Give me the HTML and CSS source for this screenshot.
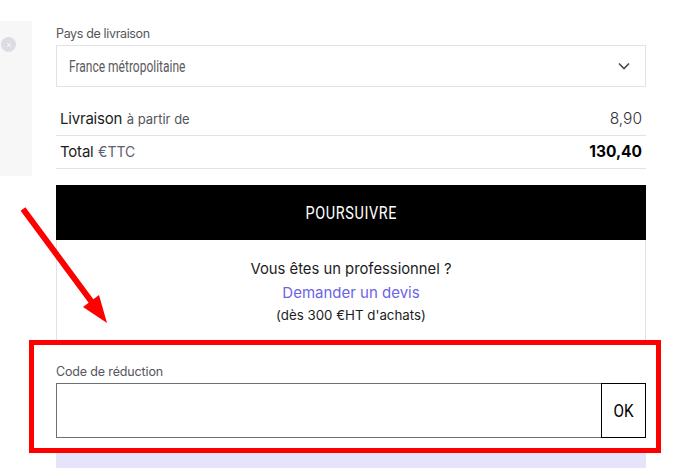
FILE: index.html
```html
<!DOCTYPE html>
<html lang="fr">
<head>
<meta charset="UTF-8">
<meta name="viewport" content="width=device-width, initial-scale=1.0">
<title>Panier</title>
<link rel="stylesheet" href="styles.css">
</head>
<body>
<div class="page">
    <aside class="side">
        <span class="remove">
            <svg width="6" height="6" viewBox="0 0 6 6"><path d="M1 1l4 4M5 1L1 5" stroke="#f4f4f6" stroke-width="1" fill="none"/></svg>
        </span>
    </aside>

    <main class="cart">
        <label class="field-label label-country">Pays de livraison</label>
        <div class="select">
            <span class="narrow narrow-left">France métropolitaine</span>
            <svg width="12" height="8" viewBox="0 0 12 8"><path d="M1 1.5l5 5 5-5" stroke="#4a4a50" stroke-width="1.6" fill="none"/></svg>
        </div>

        <div class="row row-shipping">
            <span><span class="row-title">Livraison</span> <small>à partir de</small></span>
            <span class="price">8,90</span>
        </div>
        <div class="row row-total">
            <span><span class="row-title">Total</span> <small class="ttc">€TTC</small></span>
            <strong>130,40</strong>
        </div>

        <button class="next" type="button"><span class="narrow">POURSUIVRE</span></button>

        <div class="pro">
            <p class="pro-title">Vous êtes un professionnel ?</p>
            <a class="pro-link" href="#">Demander un devis</a>
            <p class="pro-note">(dès 300 €HT d'achats)</p>
        </div>

        <div class="promo">
            <label class="field-label" for="code">Code de réduction</label>
            <div class="promo-line">
                <input type="text" id="code">
                <button type="button"><span class="narrow">OK</span></button>
            </div>
        </div>

        <div class="banner"></div>
    </main>
</div>

<!-- annotation drawn over the screenshot -->
<svg class="marks" width="680" height="468" viewBox="0 0 680 468">
    <rect x="31.5" y="342.5" width="627" height="108" fill="none" stroke="#f00" stroke-width="5"/>
    <path d="M20.6 210.8L25.4 207.2L93.4 299.2L99 295L107 323L83 307L88.6 302.8Z" fill="#f00"/>
</svg>
</body>
</html>
```
FILE: styles.css
```css
html, body {
    height: 100%;
}

body {
    margin: 0;
    overflow: hidden;
    background: #fff;
    font-family: "Inter", "Open Sans", sans-serif;
    color: #1c1c22;
}

.page {
    display: flex;
    align-items: flex-start;
    height: 468px;
    overflow: hidden;
}

.side {
    width: 32px;
    height: 155px;
    margin-top: 21px;
    padding-top: 16px;
    box-sizing: border-box;
    background: #f7f7f8;
}

.remove {
    display: flex;
    align-items: center;
    justify-content: center;
    width: 15px;
    height: 15px;
    margin-left: 1px;
    border-radius: 50%;
    background: #dcdce2;
}

.cart {
    width: 590px;
    margin-left: 24px;
    padding-top: 26px;
}

/* no condensed family available, so Roboto is squeezed */
.narrow {
    display: inline-block;
    font-family: "Roboto", sans-serif;
    transform: scaleX(0.8);
}

.narrow-left {
    transform: scaleX(0.75);
    transform-origin: left center;
}

.field-label {
    display: block;
    font-size: 12.5px;
    line-height: 15px;
    letter-spacing: -0.15px;
    color: #55555c;
}

.label-country {
    letter-spacing: -0.35px;
}

.select {
    display: flex;
    align-items: center;
    justify-content: space-between;
    height: 42px;
    margin-top: 4px;
    padding: 0 15px 0 12px;
    box-sizing: border-box;
    border: 1px solid #e2e2e6;
    font-size: 16px;
    color: #5a5a60;
}

.row {
    display: flex;
    align-items: center;
    justify-content: space-between;
    padding: 0 4px;
    border-bottom: 1px solid #e2e2e6;
}

.row-shipping {
    height: 49px;
    padding-top: 14px;
    box-sizing: border-box;
}

.row-total {
    height: 33px;
    padding-bottom: 2px;
    box-sizing: border-box;
}

.row-title {
    font-size: 15px;
    letter-spacing: -0.2px;
}

.row small {
    font-size: 13px;
    color: #55555c;
}

.row .ttc {
    font-size: 14px;
    color: #60606e;
}

.price {
    font-size: 15.5px;
    font-weight: 300;
    color: #33333a;
}

.row strong {
    font-size: 15.5px;
    font-weight: 700;
    color: #000;
}

.next {
    display: block;
    width: 100%;
    height: 55px;
    margin-top: 16px;
    border: 0;
    background: #000;
    color: #fff;
    font-size: 18px;
    letter-spacing: 0.8px;
}

.pro {
    height: 100px;
    padding-top: 20px;
    box-sizing: border-box;
    border: 1px solid #e2e2e6;
    border-top: 0;
    border-bottom: 0;
    text-align: center;
}

.pro p {
    margin: 0;
}

.pro-title {
    font-size: 14.8px;
    line-height: 19px;
}

.pro-link {
    display: block;
    margin-top: 4px;
    font-size: 15px;
    line-height: 19px;
    color: #6c63e8;
    text-decoration: none;
}

.pro .pro-note {
    margin-top: 5px;
    font-size: 13.3px;
    line-height: 16px;
}

.promo {
    padding-top: 24px;
}

.promo-line {
    display: flex;
    height: 55px;
    margin-top: 4px;
}

.promo-line input {
    flex: 1;
    min-width: 0;
    padding: 0;
    border: 1px solid #6b7078;
    border-right: 0;
    border-radius: 0;
    background: #fff;
}

.promo-line button {
    width: 45px;
    padding: 0;
    border: 1px solid #000;
    background: #fff;
    color: #000;
    font-size: 19px;
}

.banner {
    height: 15px;
    margin-top: 15px;
    background: #e6e4fa;
}

.marks {
    position: absolute;
    top: 0;
    left: 0;
}
```
